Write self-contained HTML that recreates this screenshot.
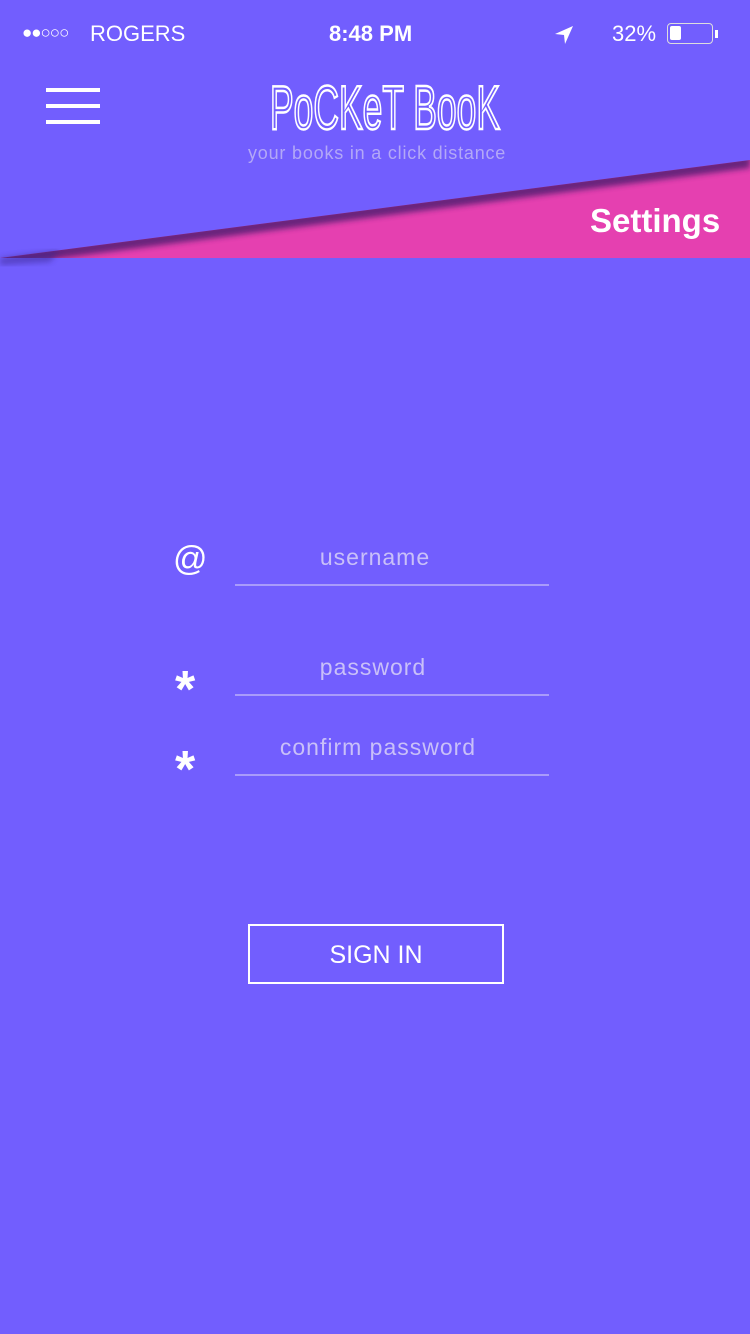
<!DOCTYPE html>
<html><head><meta charset="utf-8"><style>
body{margin:0;width:750px;height:1334px;background:#725efe;position:relative;overflow:hidden;font-family:"Liberation Sans",sans-serif;color:#fff}
.a{position:absolute}
.ph{color:#c9c0f8;font-size:23px;text-align:center;width:314px;letter-spacing:1px}
.ln{left:235px;width:314px;height:2px;background:#a99bfb}
</style></head><body>
<div class="a" style="left:22px;top:23px;font-size:17px;letter-spacing:-1px">&#9679;&#9679;&#9675;&#9675;&#9675;</div>
<div class="a" style="left:90px;top:21px;font-size:22px">ROGERS</div>
<div class="a" style="left:329px;top:21px;font-size:22px;font-weight:bold">8:48 PM</div>
<svg class="a" style="left:553px;top:24px" width="22" height="22"><path d="M20 2 L2 10 L11 11 L12 20Z" fill="#fff"/></svg>
<div class="a" style="left:612px;top:21px;font-size:22px">32%</div>
<div class="a" style="left:667px;top:23px;width:46px;height:21px;border:1.5px solid #ddd;border-radius:4px;box-sizing:border-box"><div style="margin:2px;width:11px;height:14px;background:#fff;border-radius:2px"></div></div>
<div class="a" style="left:715px;top:30px;width:3px;height:8px;background:#fff"></div>
<div class="a" style="left:46px;top:88px;width:54px;height:4px;background:#fff;box-shadow:0 16px 0 #fff,0 32px 0 #fff"></div>
<svg class="a" style="left:260px;top:74px" width="250" height="60"><text x="10" y="55" font-family="Liberation Sans" font-size="62" textLength="230" lengthAdjust="spacingAndGlyphs" fill="none" stroke="#fff" stroke-width="2.5">PoCKeT BooK</text></svg>
<div class="a" style="left:248px;top:143px;font-size:18px;color:#b3a8f7;letter-spacing:0.8px">your books in a click distance</div>
<svg class="a" style="left:0;top:150px" width="750" height="120"><defs><filter id="b"><feGaussianBlur stdDeviation="3"/></filter><clipPath id="c"><polygon points="0,108 750,10 750,108"/></clipPath></defs>
<polygon points="0,108 750,10 750,108" fill="#e540b0"/>
<g clip-path="url(#c)"><polygon points="0,104 750,6 750,18 0,116" fill="#4a1c6e" opacity=".8" filter="url(#b)"/></g>
<polygon points="0,108 60,100 50,112 0,115" fill="#3a2890" opacity=".5" filter="url(#b)"/></svg>
<div class="a" style="left:590px;top:202px;font-size:33px;font-weight:bold">Settings</div>
<div class="a" style="left:173px;top:540px;font-size:34px">@</div>
<div class="a ph" style="top:544px;left:218px">username</div><div class="a ln" style="top:584px"></div>
<div class="a" style="left:175px;top:664px;font-size:52px;font-weight:bold;line-height:52px">*</div>
<div class="a ph" style="top:654px;left:216px">password</div><div class="a ln" style="top:694px"></div>
<div class="a" style="left:175px;top:744px;font-size:52px;font-weight:bold;line-height:52px">*</div>
<div class="a ph" style="top:734px;left:221px">confirm password</div><div class="a ln" style="top:774px"></div>
<div class="a" style="left:248px;top:924px;width:256px;height:60px;border:2px solid #fff;box-sizing:border-box;text-align:center;line-height:58px;font-size:25px">SIGN IN</div>
</body></html>
